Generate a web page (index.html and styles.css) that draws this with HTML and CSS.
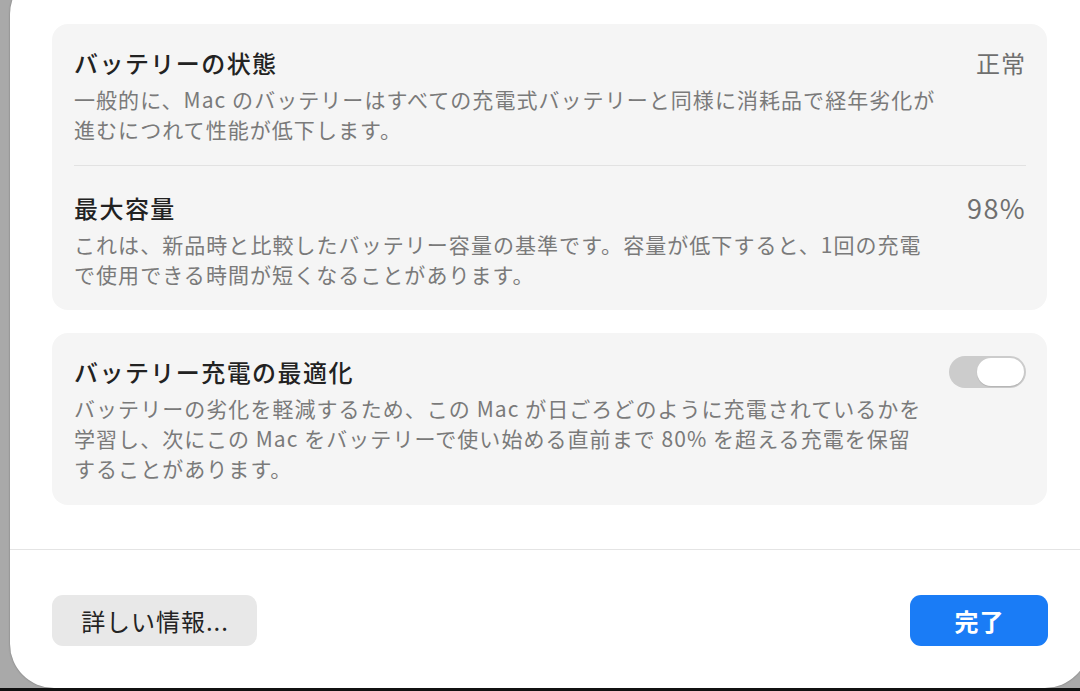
FILE: index.html
```html
<!DOCTYPE html>
<html lang="ja">
<head>
    <meta charset="UTF-8">
    <meta name="viewport" content="width=device-width, initial-scale=1.0">
    <title>バッテリーの状態</title>
    <link rel="stylesheet" href="styles.css">
</head>
<body>
    <div class="backdrop">
        <div class="sheet">
            <div class="content">
                <div class="group">
                    <div class="row">
                        <div class="text">
                            <h3>バッテリーの状態</h3>
                            <p>一般的に、Mac のバッテリーはすべての充電式バッテリーと同様に消耗品で経年劣化が<br>進むにつれて性能が低下します。</p>
                        </div>
                        <span class="value">正常</span>
                    </div>
                    <div class="row">
                        <div class="text">
                            <h3>最大容量</h3>
                            <p>これは、新品時と比較したバッテリー容量の基準です。容量が低下すると、1回の充電<br>で使用できる時間が短くなることがあります。</p>
                        </div>
                        <span class="value num">98%</span>
                    </div>
                </div>

                <div class="group">
                    <div class="row">
                        <div class="text">
                            <h3>バッテリー充電の最適化</h3>
                            <p>バッテリーの劣化を軽減するため、この Mac が日ごろどのように充電されているかを<br>学習し、次にこの Mac をバッテリーで使い始める直前まで 80% を超える充電を保留<br>することがあります。</p>
                        </div>
                        <div class="toggle"><span class="knob"></span></div>
                    </div>
                </div>
            </div>

            <div class="footer">
                <button class="btn">詳しい情報...</button>
                <button class="btn primary">完了</button>
            </div>
        </div>
    </div>
    <div class="bottom-edge"></div>
</body>
</html>
```

FILE: styles.css
```css
html, body {
    height: 100%;
}
body {
    font-family: "Noto Sans CJK JP", "Noto Sans", sans-serif;
    margin: 0;
    padding: 0;
    display: flex;
    flex-direction: column;
    overflow: hidden;
    background-color: #000;
}
.backdrop {
    flex: 1;
    background-color: #a9a9a9;
    padding-left: 10px;
    overflow: hidden;
}
.sheet {
    width: 1079px;
    height: 718px;
    margin-top: -30px;
    background-color: #fff;
    border-radius: 44px;
    box-shadow: 0 0 2px rgba(0, 0, 0, 0.35);
    display: flex;
    flex-direction: column;
    box-sizing: border-box;
    padding-top: 30px;
}
.content {
    padding: 24px 42px 0;
    display: flex;
    flex-direction: column;
    gap: 23px;
    height: 550px;
    box-sizing: border-box;
    border-bottom: 1px solid #e4e4e4;
}
.group {
    background-color: #f5f5f5;
    border-radius: 16px;
    padding: 0 21px 0 22px;
}
.row {
    display: flex;
    justify-content: space-between;
    align-items: flex-start;
    padding: 24px 0 21px;
}
.row + .row {
    border-top: 1px solid #e2e2e2;
    padding-top: 27px;
}
.group:last-child .row {
    padding-bottom: 22px;
}
h3 {
    margin: 0 0 6px;
    font-size: 24px;
    line-height: 30px;
    font-weight: 500;
    color: #222;
    letter-spacing: 0.06em;
}
p {
    margin: 0;
    font-size: 21px;
    line-height: 30px;
    color: #7a7a7a;
    letter-spacing: 0.05em;
    white-space: nowrap;
}
.value {
    font-size: 24px;
    line-height: 30px;
    color: #6f6f6f;
    letter-spacing: 0.04em;
}
.num {
    font-size: 27px;
    letter-spacing: 0.05em;
}
.toggle {
    width: 77px;
    height: 32px;
    border-radius: 16px;
    background-color: #cccccc;
    box-sizing: border-box;
    padding: 2px;
    display: flex;
    justify-content: flex-end;
    margin-top: -1px;
}
.knob {
    width: 47px;
    height: 28px;
    border-radius: 14px;
    background-color: #fff;
    box-shadow: 0 1px 1px rgba(0, 0, 0, 0.12);
}
.footer {
    display: flex;
    justify-content: space-between;
    padding: 45px 41px 0 42px;
}
.btn {
    font-family: inherit;
    font-size: 24px;
    letter-spacing: 0.04em;
    height: 51px;
    border: none;
    border-radius: 11px;
    background-color: #e8e8e8;
    color: #232323;
    padding: 0 26px 0 27px;
    width: 205px;
}
.primary {
    width: 138px;
    background-color: #1a7cf6;
    color: #fff;
    font-weight: 700;
}
.bottom-edge {
    height: 3px;
    background-color: #111;
}
```
